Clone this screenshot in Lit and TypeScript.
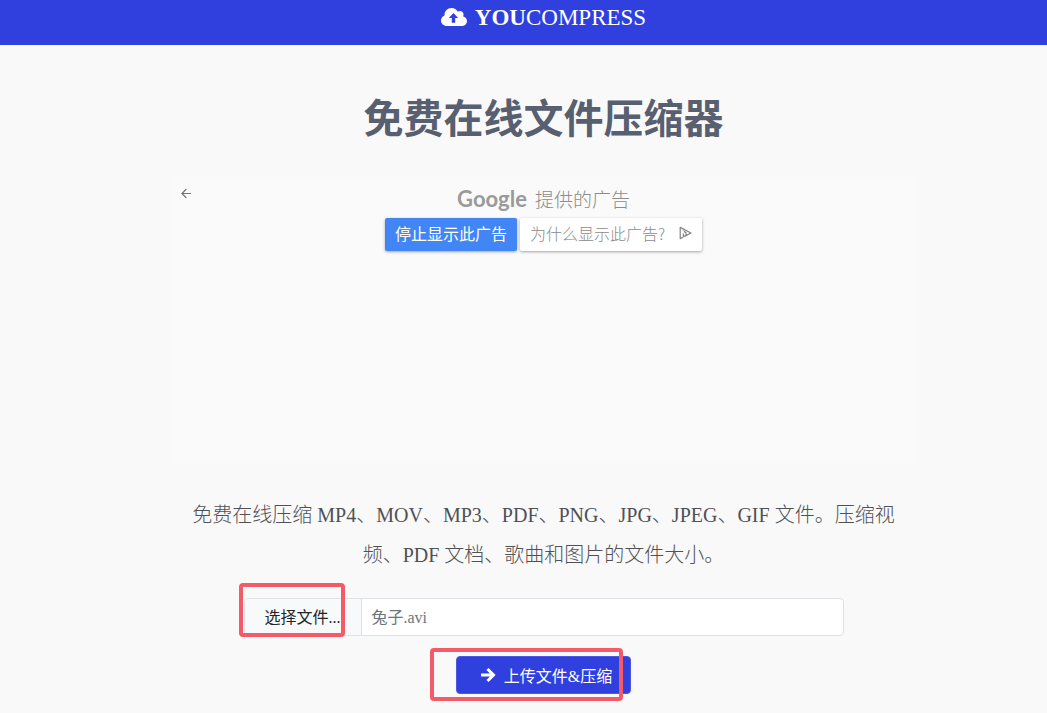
import { LitElement, html, css } from "lit";
import { customElement, state } from "lit/decorators.js";

@customElement("ad-panel")
class AdPanel extends LitElement {
  static styles = css`
    :host {
      display: block;
      box-sizing: border-box;
      min-height: 288px;
      padding: 8px 8px 0;
      background: #fafafa;
      font-family: "Noto Sans CJK SC", sans-serif;
      font-weight: 300;
      color: #8c8c8c;
    }
    .top {
      display: grid;
      grid-template-columns: 16px 1fr 16px;
      align-items: start;
    }
    .back {
      display: flex;
      padding: 3px 0 0 0;
      border: 0;
      background: none;
      color: #757575;
    }
    .credit {
      display: flex;
      justify-content: center;
      align-items: baseline;
      gap: 8px;
      font-size: 19px;
      line-height: 30px;
    }
    .brand {
      font-family: Lato, sans-serif;
      font-weight: 700;
      font-size: 22px;
      color: #9a9a9a;
    }
    .actions {
      display: flex;
      justify-content: center;
      gap: 3px;
      margin-top: 4px;
    }
    .action {
      display: flex;
      align-items: center;
      gap: 12px;
      height: 33px;
      padding: 0 10px 3px;
      border: 0;
      border-radius: 2px;
      background: #fff;
      color: #8c8c8c;
      font: inherit;
      font-size: 16px;
      box-shadow: 0 1px 3px rgba(0, 0, 0, 0.35);
    }
    .primary {
      background: #4285f4;
      color: #fff;
      font-weight: 400;
    }
  `;

  render() {
    return html`
      <div class="top">
        <button class="back" aria-label="返回">
          <svg width="13" height="13" viewBox="0 0 13 13" fill="none" stroke="currentColor" stroke-width="1.2">
            <path d="M11 6.5H2M6.4 2L1.9 6.5L6.4 11" />
          </svg>
        </button>
        <div class="credit"><span class="brand">Google</span><span>提供的广告</span></div>
      </div>
      <div class="actions">
        <button class="action primary">停止显示此广告</button>
        <button class="action">
          <span>为什么显示此广告?</span>
          <svg width="15" height="14" viewBox="0 0 15 14" fill="none" stroke="#858585" stroke-width="1.2" stroke-linejoin="round">
            <path d="M6 11.2L3.2 12.6V1.4L14 7L9 9.6V6.6L6.8 5.4" />
            <path d="M6.4 7.4V10.6L9 9.6M6.4 3.8V4.6" />
          </svg>
        </button>
      </div>
    `;
  }
}

@customElement("app-root")
class AppRoot extends LitElement {
  static styles = css`
    :host {
      display: block;
      min-height: 100vh;
      background: #f9f9f9;
      color: #4f5156;
      font-family: "Liberation Serif", "Noto Sans CJK SC", serif;
    }
    .bar,
    .content {
      padding-left: 40px;
    }
    .bar {
      display: flex;
      justify-content: center;
      height: 45px;
      background: #3040de;
    }
    .logo {
      display: flex;
      align-items: center;
      gap: 8px;
      height: 36px;
      color: #fff;
      font-size: 23px;
      text-decoration: none;
    }
    .content {
      display: flex;
      flex-direction: column;
      align-items: center;
    }
    h1 {
      margin: 41px 0 30px;
      font-family: "Noto Sans CJK SC", sans-serif;
      font-size: 40px;
      line-height: 60px;
      font-weight: 700;
      color: #585f70;
    }
    ad-panel {
      width: 100%;
      max-width: 744px;
    }
    .intro {
      max-width: 720px;
      margin: 31px 0 23px;
      font-size: 20px;
      line-height: 40px;
      font-weight: 300;
      text-align: center;
    }
    form {
      display: flex;
      flex-direction: column;
      align-items: center;
      gap: 20px;
      width: 100%;
      max-width: 600px;
      font-size: 16px;
    }
    .picker {
      display: flex;
      box-sizing: border-box;
      position: relative;
      width: 100%;
      height: 38px;
      border: 1px solid #dee2e6;
      border-radius: 4px;
      background: #fff;
    }
    .choose {
      padding: 0 20px 2px;
      border: 0;
      border-right: 1px solid #dee2e6;
      border-radius: 3px 0 0 3px;
      background: #f8f9fa;
      color: #212529;
      font: inherit;
      white-space: nowrap;
    }
    .name {
      flex: 1;
      min-width: 0;
      padding: 0 10px 2px;
      border: 0;
      border-radius: 0 3px 3px 0;
      outline: 0;
      background: transparent;
      color: #6c757d;
      font: inherit;
    }
    .send {
      position: relative;
    }
    .submit {
      display: flex;
      align-items: center;
      gap: 8px;
      height: 38px;
      padding: 0 18px 0 24px;
      border: 1px solid #4a58e4;
      border-radius: 4px;
      background: #3040de;
      color: #fff;
      font: inherit;
    }
    .mark {
      position: absolute;
      box-sizing: border-box;
      border: 4px solid #f45b69;
      border-radius: 4px;
      pointer-events: none;
    }
    .mark-choose {
      left: -6px;
      top: -16px;
      width: 106px;
      height: 54px;
    }
    .mark-submit {
      left: -26px;
      top: -8px;
      width: 193px;
      height: 53px;
    }
  `;

  @state() private fileName = "兔子.avi";

  render() {
    return html`
      <header class="bar">
        <a class="logo" href="#">
          <svg width="26" height="20" viewBox="0 0 26 20">
            <path fill="#fff" d="M6 18C2.6 18 0 15.6 0 12.5C0 10.2 1.4 8.3 3.5 7.4V7C3.5 3 6.6 0 10.5 0C13.3 0 15.7 1.5 16.8 3.8C17.4 3.3 18.2 3 19 3C21 3 22.5 4.5 22.5 6.5C22.5 7.1 22.3 7.7 22 8.2C24.3 8.8 26 10.7 26 13C26 15.8 23.8 18 21 18Z" />
            <path fill="#3040de" d="M12.5 5L17.2 10H14.2V14.8H10.8V10H7.8Z" />
          </svg>
          <span><b>YOU</b>COMPRESS</span>
        </a>
      </header>
      <main class="content">
        <h1>免费在线文件压缩器</h1>
        <ad-panel></ad-panel>
        <p class="intro">
          免费在线压缩 MP4、MOV、MP3、PDF、PNG、JPG、JPEG、GIF 文件。压缩视频、PDF 文档、歌曲和图片的文件大小。
        </p>
        <form @submit=${(e: Event) => e.preventDefault()}>
          <div class="picker">
            <button class="choose" type="button">选择文件...</button>
            <input class="name" type="text" readonly aria-label="文件名" .value=${this.fileName} />
            <span class="mark mark-choose"></span>
          </div>
          <div class="send">
            <button class="submit" type="submit">
              <svg width="15" height="16" viewBox="0 0 15 16" fill="none" stroke="#fff" stroke-width="3">
                <path d="M0 8H12M6.5 2L12.5 8L6.5 14" />
              </svg>
              <span>上传文件&amp;压缩</span>
            </button>
            <span class="mark mark-submit"></span>
          </div>
        </form>
      </main>
    `;
  }
}
